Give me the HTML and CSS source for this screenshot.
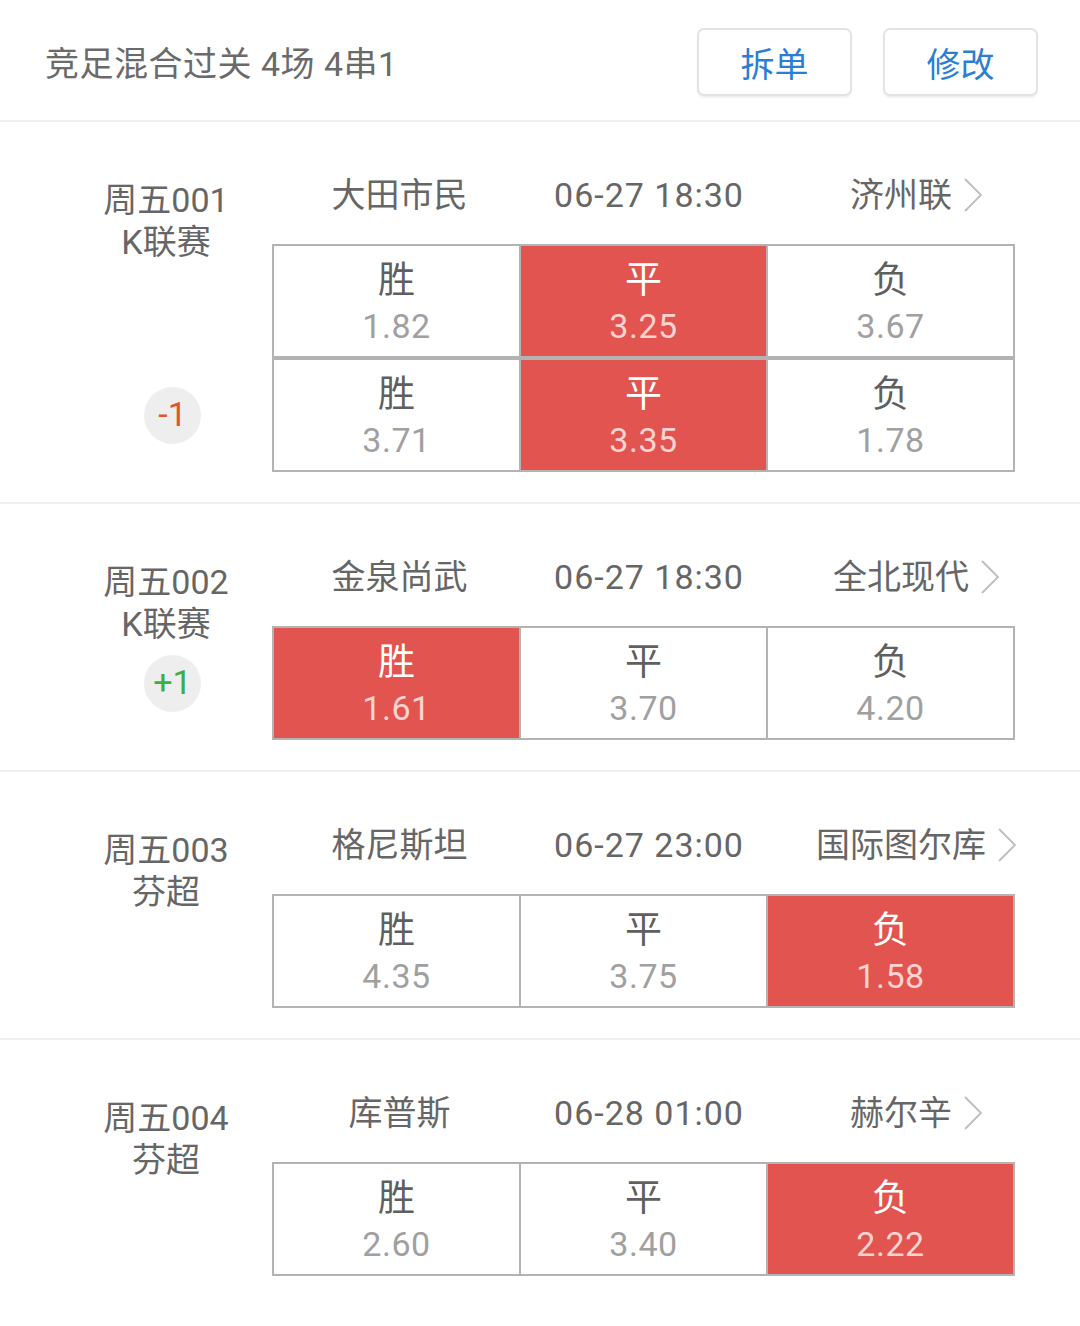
FILE: index.html
```html
<!DOCTYPE html>
<html lang="zh-CN">
<head>
<meta charset="utf-8">
<title>竞足混合过关</title>
<link rel="stylesheet" href="styles.css">
</head>
<body>
<header class="topbar">
  <div class="title">竞足混合过关 4场 4串1</div>
  <div class="actions">
    <button class="btn">拆单</button>
    <button class="btn">修改</button>
  </div>
</header>

<section class="match">
  <div class="league"><div>周五001</div><div>K联赛</div></div>
  <div class="teams">
    <span class="home">大田市民</span>
    <span class="time">06-27 18:30</span>
    <span class="away">济州联<svg class="chev" viewBox="0 0 18 34"><path d="M1 1 L17 17 L1 33"/></svg></span>
  </div>
  <div class="odds r2"><div class="cell"><b>胜</b><i>1.82</i></div><div class="cell on"><b>平</b><i>3.25</i></div><div class="cell"><b>负</b><i>3.67</i></div></div>
  <div class="odds r3"><div class="cell"><b>胜</b><i>3.71</i></div><div class="cell on"><b>平</b><i>3.35</i></div><div class="cell"><b>负</b><i>1.78</i></div></div>
  <div class="badge minus r3">-1</div>
</section>

<section class="match">
  <div class="league"><div>周五002</div><div>K联赛</div></div>
  <div class="teams">
    <span class="home">金泉尚武</span>
    <span class="time">06-27 18:30</span>
    <span class="away">全北现代<svg class="chev" viewBox="0 0 18 34"><path d="M1 1 L17 17 L1 33"/></svg></span>
  </div>
  <div class="odds r2"><div class="cell on"><b>胜</b><i>1.61</i></div><div class="cell"><b>平</b><i>3.70</i></div><div class="cell"><b>负</b><i>4.20</i></div></div>
  <div class="badge plus r2">+1</div>
</section>

<section class="match">
  <div class="league"><div>周五003</div><div>芬超</div></div>
  <div class="teams">
    <span class="home">格尼斯坦</span>
    <span class="time">06-27 23:00</span>
    <span class="away">国际图尔库<svg class="chev" viewBox="0 0 18 34"><path d="M1 1 L17 17 L1 33"/></svg></span>
  </div>
  <div class="odds r2"><div class="cell"><b>胜</b><i>4.35</i></div><div class="cell"><b>平</b><i>3.75</i></div><div class="cell on"><b>负</b><i>1.58</i></div></div>
</section>

<section class="match last">
  <div class="league"><div>周五004</div><div>芬超</div></div>
  <div class="teams">
    <span class="home">库普斯</span>
    <span class="time">06-28 01:00</span>
    <span class="away">赫尔辛<svg class="chev" viewBox="0 0 18 34"><path d="M1 1 L17 17 L1 33"/></svg></span>
  </div>
  <div class="odds r2"><div class="cell"><b>胜</b><i>2.60</i></div><div class="cell"><b>平</b><i>3.40</i></div><div class="cell on"><b>负</b><i>2.22</i></div></div>
</section>
</body>
</html>
```
FILE: styles.css
```css
* { box-sizing: border-box; }
html, body { margin: 0; padding: 0; background: #fff; }
body {
  width: 1080px;
  font-family: Roboto, "Noto Sans CJK SC", "Noto Sans", sans-serif;
  color: #666;
}

.topbar {
  height: 122px;
  padding: 2px 42px 0 45px;
  display: flex;
  align-items: center;
  justify-content: space-between;
  border-bottom: 2px solid #efefef;
}
.title {
  font-size: 34px;
  color: #6a6a6a;
  letter-spacing: 0.5px;
}
.actions { display: flex; gap: 31px; margin-top: 2px; }
.btn {
  width: 155px;
  height: 68px;
  border: 2px solid #e3e3e3;
  border-radius: 7px;
  background: #fff;
  box-shadow: 0 2px 2px rgba(0, 0, 0, 0.06);
  font-family: Roboto, "Noto Sans CJK SC", sans-serif;
  font-size: 34px;
  color: #2a7fd5;
  padding: 0;
}

.match {
  display: grid;
  grid-template-columns: 272px 743px;
  grid-template-rows: 75px auto auto;
  padding: 47px 0 30px;
  border-bottom: 2px solid #efefef;
}
.match.last { border-bottom: none; }

.league {
  grid-column: 1;
  grid-row: 1 / span 2;
  align-self: start;
  margin-top: 10px;
  padding-left: 60px;
  text-align: center;
  font-size: 34px;
  line-height: 42px;
  color: #666;
}

.teams {
  grid-column: 2;
  grid-row: 1;
  align-self: start;
  display: flex;
  height: 48px;
  margin-top: 2px;
  width: 790px;
  font-size: 34px;
  line-height: 48px;
  color: #666;
}
.teams span { display: flex; justify-content: center; align-items: center; white-space: nowrap; }
.home { width: 255px; }
.time { width: 244px; letter-spacing: 1px; }
.away { width: 290px; }
.chev {
  width: 18px;
  height: 34px;
  margin-left: 12px;
  fill: none;
  stroke: #bdbdbd;
  stroke-width: 1.8;
}

.odds {
  grid-column: 2;
  display: grid;
  grid-template-columns: repeat(3, 1fr);
  gap: 2px;
  padding: 2px;
  background: #b3b3b3;
  height: 114px;
}
.r2 { grid-row: 2; }
.r3 { grid-row: 3; }
.cell {
  background: #fff;
  display: flex;
  flex-direction: column;
  align-items: center;
  justify-content: center;
  padding-top: 4px;
}
.cell b {
  font-weight: normal;
  font-size: 37px;
  line-height: 46px;
  color: #5f5f5f;
}
.cell i {
  font-style: normal;
  font-size: 34px;
  line-height: 44px;
  color: #a0a0a0;
  letter-spacing: 0.5px;
}
.cell.on { background: #e2544f; }
.cell.on b { color: #fff; }
.cell.on i { color: #fcd3d0; }

.badge {
  grid-column: 1;
  align-self: center;
  justify-self: start;
  margin-left: 144px;
  width: 57px;
  height: 57px;
  border-radius: 50%;
  background: #eeeeee;
  display: flex;
  align-items: center;
  justify-content: center;
  font-size: 34px;
  padding-bottom: 2px;
}
.badge.minus { color: #e0552f; }
.badge.plus { color: #3caf3f; }
```
